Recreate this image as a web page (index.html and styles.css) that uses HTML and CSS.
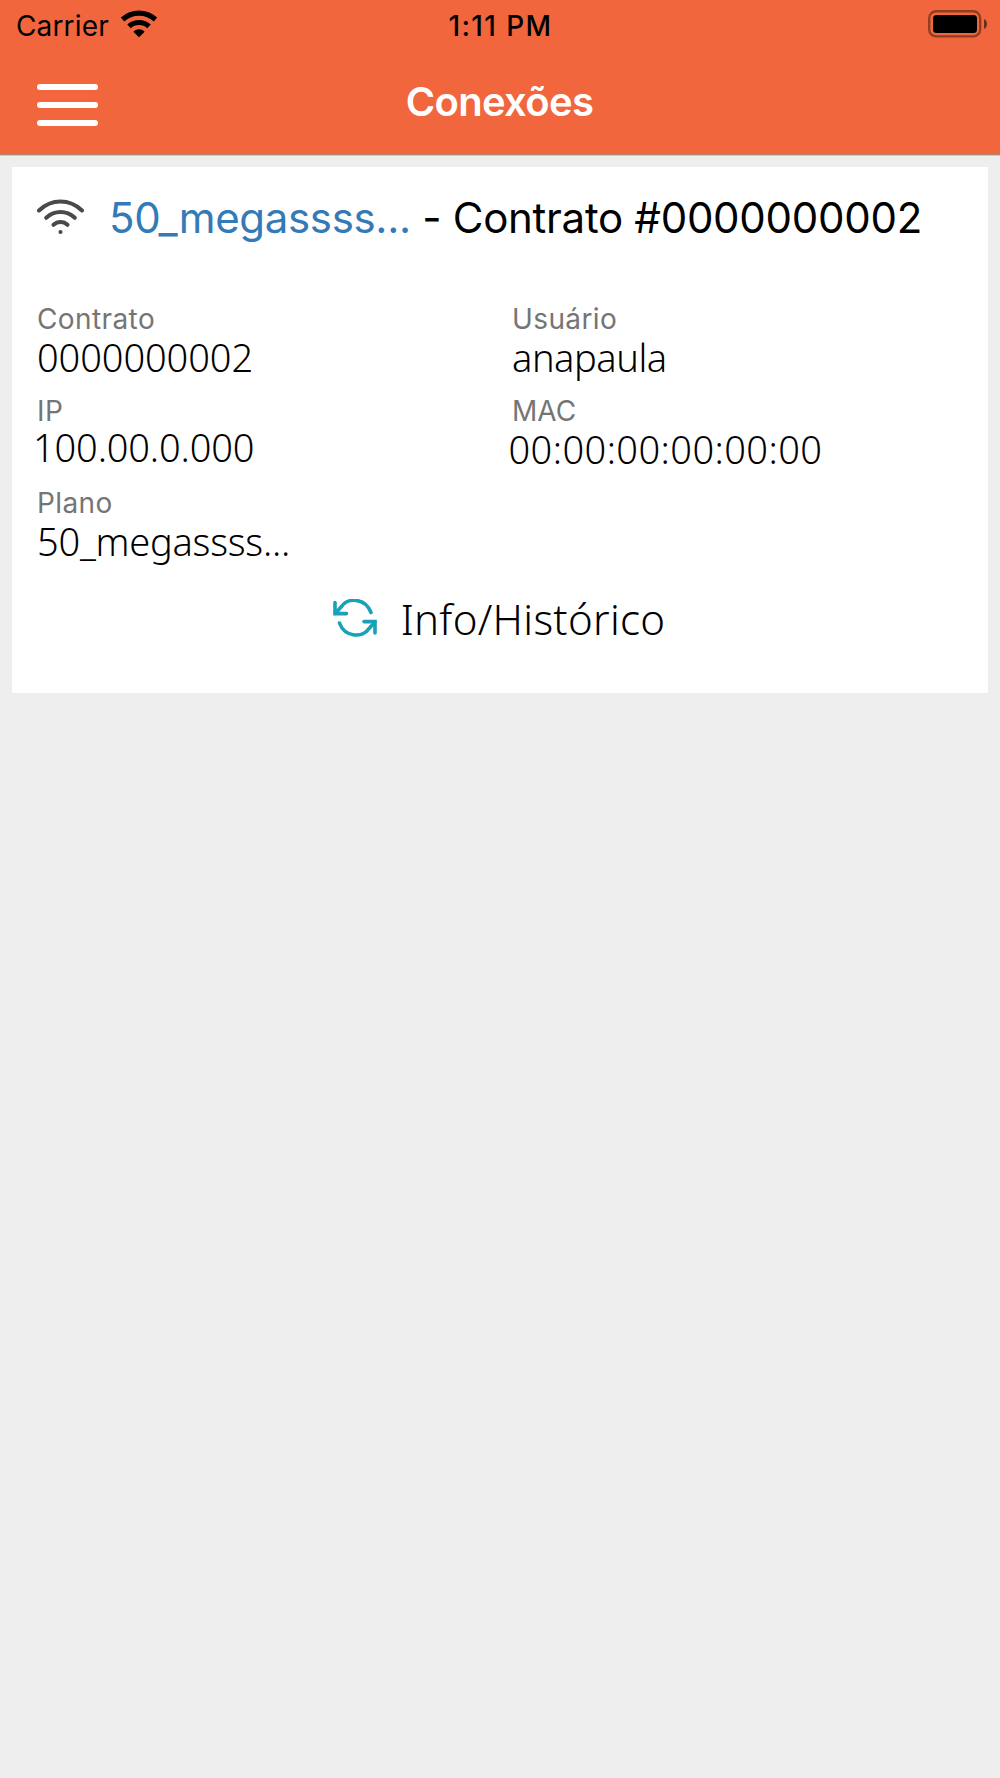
FILE: index.html
```html
<!DOCTYPE html>
<html lang="pt-BR">
<head>
<meta charset="utf-8">
<title>Conexões</title>
<link rel="stylesheet" href="styles.css">
</head>
<body>
<header class="header">
  <div class="status">
    <div class="status-left">
      <span class="carrier">Carrier</span>
      <svg class="signal" width="38" height="28" viewBox="0 0 38 28">
        <g fill="none" stroke="#000" stroke-width="5.2"><path d="M2.500 9.500C12 1 26 1 35.500 9.500"/><path d="M9 16.300C14.500 11.200 23.500 11.200 29 16.300"/></g>
        <path d="M13.300 21.700C16.200 18.400 21.800 18.400 24.700 21.700L19 27.200Z"/>
      </svg>
    </div>
    <span class="clock">1:11 PM</span>
    <svg class="battery" width="60" height="28" viewBox="0 0 60 28">
      <rect x="1.200" y="1.200" width="51" height="25.200" rx="7" fill="none" stroke="#000" stroke-opacity=".4" stroke-width="2.400"/>
      <rect x="5" y="5" width="44" height="18" rx="3.500"/>
      <path d="M56 9C60 10.500 60 17.500 56 19Z" fill-opacity=".55"/>
    </svg>
  </div>
  <div class="nav">
    <div class="menu"><i class="bar"></i><i class="bar"></i><i class="bar"></i></div>
    <h1 class="title">Conexões</h1>
  </div>
</header>
<main class="card">
  <div class="heading">
    <svg class="wifi" width="47" height="36" viewBox="0 0 47 36">
      <g fill="none" stroke="#4a4a4a" stroke-width="4" stroke-linecap="round"><path d="M2 11.500C14.500-.5 32.500-.5 45 11.500"/><path d="M9.200 18.800C17.500 11 29.500 11 37.800 18.800"/><path d="M16.500 25.800C20.500 22 26.500 22 30.500 25.800"/></g>
      <circle cx="23.500" cy="33" r="2.100" fill="#4a4a4a"/>
    </svg>
    <span class="plan">50_megassss...</span>
    <span class="contract">- Contrato #0000000002</span>
  </div>
  <dl class="fields">
    <div class="field"><dt>Contrato</dt><dd>0000000002</dd></div>
    <div class="field"><dt>Usuário</dt><dd class="user">anapaula</dd></div>
    <div class="field"><dt>IP</dt><dd class="ip">100.00.0.000</dd></div>
    <div class="field"><dt class="acronym">MAC</dt><dd class="mac">00:00:00:00:00:00</dd></div>
    <div class="field"><dt>Plano</dt><dd class="plan-name">50_megassss...</dd></div>
  </dl>
  <div class="action">
    <svg class="refresh" width="44" height="38" viewBox="0 0 44 38">
      <g fill="none" stroke="#17a2b8" stroke-width="3.600" stroke-linecap="round"><path d="M38 13.500C32-1.500 15-1.500 8.500 7.500L2.500 14.300"/><path d="M2 3.500V14.600H13.500"/><path d="M6.500 24C12 39 30 39 36 29.500L42 23"/><path d="M42 34V22.600H31"/></g>
    </svg>
    <span>Info/Histórico</span>
  </div>
</main>
</body>
</html>
```
FILE: styles.css
```css
* { box-sizing: border-box; }
body { margin: 0; min-height: 1778px; background: #eee; font-family: Inter, "Liberation Sans", sans-serif; color: #000; }
.header { height: 156px; background: #f2663d; border-bottom: 1px solid #a5dbe6; }
.status { height: 50px; display: grid; grid-template-columns: 1fr auto 1fr; align-items: start; padding: 0 12px 0 16px; }
.status-left { display: flex; gap: 11px; }
.carrier, .clock { font-size: 28px; line-height: 52px; white-space: nowrap; letter-spacing: .15px; }
.clock { font-weight: 500; letter-spacing: 1.4px; margin-right: 3px; }
.signal { margin-top: 10px; }
.battery { justify-self: end; margin-top: 10px; }
.nav { height: 105px; display: grid; grid-template-columns: 1fr auto 1fr; padding: 0 37px; box-shadow: inset 0 -1px #a98571; }
.menu { display: flex; flex-direction: column; gap: 12px; padding-top: 34px; }
.bar { width: 61px; height: 6px; border-radius: 3px; background: #fff; }
.title { margin: 0 1px 0 0; font-size: 40px; line-height: 103px; font-weight: 600; letter-spacing: -.7px; color: #fff; }
.card { margin: 11px 12px 0; height: 526px; padding: 0 25px; background: #fff; }
.heading { display: flex; height: 104px; font-size: 42px; line-height: 102px; white-space: nowrap; }
.wifi { margin: 32px 25px 0 0; }
.plan { color: #337ab7; margin-right: 11.5px; letter-spacing: -.33px; }
.contract { letter-spacing: -.28px; }
.fields { margin: 28px 0 0; display: grid; grid-template-columns: 475px 1fr; grid-auto-rows: 92px; }
.field { display: flex; flex-direction: column; }
dt { height: 36px; font-size: 28px; line-height: 40px; letter-spacing: .4px; color: #757575; }
.acronym { letter-spacing: 0; }
dd { margin: 0; height: 44px; font: 300 38px/44px "Noto Sans", "Open Sans", sans-serif; letter-spacing: -.1px; white-space: nowrap; }
.user { letter-spacing: -.45px; }
.ip { margin: -2px 0 0 -4px; letter-spacing: -.15px; }
.mac { margin-left: -3.5px; letter-spacing: .42px; }
.plan-name { letter-spacing: -.25px; }
.action { display: flex; justify-content: center; margin: 14px 2px 0 0; font: 300 42px/60px "Noto Sans", "Open Sans", sans-serif; letter-spacing: .3px; }
.refresh { margin: 10px 24px 0 0; }
```
